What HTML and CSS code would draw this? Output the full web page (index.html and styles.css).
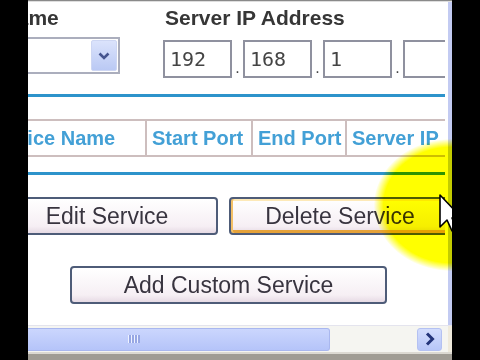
FILE: index.html
```html
<!DOCTYPE html>
<html lang="en">
<head>
    <meta charset="UTF-8">
    <title>Port Forwarding - Custom Services</title>
    <link rel="stylesheet" href="styles.css">
</head>
<body>
    <div class="screen">
        <div class="topline"></div>
        <div class="main">
            <div class="page">
                <div class="content">
                    <div class="fields">
                        <div class="field field-name">
                            <label>Service Name</label>
                            <div class="select">
                                <span class="select-btn">
                                    <svg width="12" height="8" viewBox="0 0 12 8"><path d="M1.5 1.5 L6 6 L10.5 1.5" fill="none" stroke="#46558f" stroke-width="2.6"/></svg>
                                </span>
                            </div>
                        </div>
                        <div class="field field-ip">
                            <label>Server IP Address</label>
                            <div class="ip">
                                <input class="octet" type="text" value="192">
                                <span class="dot">.</span>
                                <input class="octet" type="text" value="168">
                                <span class="dot">.</span>
                                <input class="octet" type="text" value="1">
                                <span class="dot">.</span>
                                <input class="octet" type="text" value="">
                            </div>
                        </div>
                    </div>

                    <div class="rule"></div>

                    <table class="services">
                        <colgroup>
                            <col class="col-name">
                            <col class="col-start">
                            <col class="col-end">
                            <col class="col-ip">
                        </colgroup>
                        <tr>
                            <th class="name-head">Service Name</th>
                            <th>Start Port</th>
                            <th>End Port</th>
                            <th>Server IP</th>
                        </tr>
                    </table>

                    <div class="rule rule-low"></div>

                    <div class="actions">
                        <button class="btn">Edit Service</button>
                        <button class="btn btn-hover">Delete Service</button>
                    </div>
                    <div class="add-row">
                        <button class="btn btn-wide">Add Custom Service</button>
                    </div>
                </div>
            </div>
            <div class="vstrip"></div>
        </div>

        <div class="hscroll">
            <div class="thumb"><span class="grip"></span></div>
            <div class="arrow">
                <svg width="10" height="14" viewBox="0 0 10 14"><path d="M2 1.5 L7.5 7 L2 12.5" fill="none" stroke="#23347a" stroke-width="3"/></svg>
            </div>
            <div class="corner"></div>
        </div>
        <div class="status"></div>

        <!-- screen recorder cursor highlight -->
        <div class="spot"></div>
        <svg class="cursor" width="26" height="40" viewBox="0 0 26 40">
            <path d="M1 1 L1 33 L8 26 L13 37 L18 35 L13 24 L23 24 Z" fill="#fff" stroke="#000" stroke-width="1.6" stroke-linejoin="round"/>
        </svg>
    </div>
</body>
</html>
```

FILE: styles.css
```css
/* General Page Styling */
body {
    margin: 0;
    background: #000;
    font-family: "Liberation Sans", Arial, sans-serif;
}

.screen {
    position: relative;
    width: 424px;
    height: 360px;
    margin-left: 28px;
    background: #fff;
    overflow: hidden;
    display: flex;
    flex-direction: column;
}

.topline {
    flex: none;
    height: 2px;
    background: linear-gradient(#8a8a8a 50%, #dedede 50%);
}

.main {
    flex: 1;
    display: flex;
    min-height: 0;
    background: #fff;
}

.page {
    width: 417px;
    overflow: hidden;
}

.vstrip {
    width: 4px;
    margin-left: auto;
    background: #c3cbf2;
}

/* page is scrolled sideways, so the left part is cut off */
.content {
    width: 620px;
    margin-left: -107px;
    padding-top: 4px;
}

/* Service name + IP fields */
.fields {
    display: flex;
    gap: 43px;
}

.field-name {
    width: 199px;
}

.field label {
    display: block;
    font-size: 21px;
    font-weight: bold;
    line-height: 24px;
    color: #363636;
    white-space: nowrap;
}

.field-ip label {
    padding-left: 2px;
}

.select {
    margin-top: 7px;
    height: 37px;
    box-sizing: border-box;
    border: 2px solid #abaebd;
    padding: 1px;
    display: flex;
    justify-content: flex-end;
}

.select-btn {
    width: 26px;
    height: 31px;
    box-sizing: border-box;
    border: 1px solid #cdd6f3;
    border-radius: 2px;
    background: linear-gradient(#dbe3fc, #bac9f4);
    display: flex;
    align-items: center;
    justify-content: center;
}

.ip {
    margin-top: 10px;
    display: flex;
}

.octet {
    width: 69px;
    height: 38px;
    box-sizing: border-box;
    border: 2px solid #8f919f;
    padding: 0 0 0 5px;
    margin: 0;
    font-family: "DejaVu Sans Mono", "Liberation Mono", monospace;
    font-size: 20px;
    color: #444;
    background: #fff;
    outline: none;
}

.dot {
    width: 11px;
    display: flex;
    align-items: flex-end;
    justify-content: center;
    font-size: 16px;
    line-height: 16px;
    padding-bottom: 2px;
    color: #444;
}

/* Blue separators */
.rule {
    margin-top: 16px;
    height: 3px;
    background: #2d93cb;
}

.rule-low {
    margin-top: 15px;
}

/* Services table header */
.services {
    margin-top: 22px;
    margin-left: 50px;
    border-collapse: collapse;
    table-layout: fixed;
    width: 504px;
}

.col-name { width: 174px; }
.col-start { width: 106px; }
.col-end { width: 94px; }
.col-ip { width: 130px; }

.services th {
    border: 2px solid #cdbebe;
    padding: 0 0 0 5px;
    height: 34px;
    font-size: 20px;
    font-weight: bold;
    color: #43a0d6;
    text-align: left;
    white-space: nowrap;
    overflow: hidden;
}

.services .name-head {
    padding-left: 11px;
}

/* Buttons */
.actions {
    margin-top: 22px;
    margin-left: 75px;
    display: flex;
    gap: 11px;
}

.btn {
    flex: none;
    width: 222px;
    height: 38px;
    box-sizing: border-box;
    padding: 0;
    border: 2px solid #4e5c78;
    border-radius: 4px;
    background: linear-gradient(#ffffff, #f6eff4 80%, #e6dae4);
    font-family: "Liberation Sans", Arial, sans-serif;
    font-size: 23px;
    color: #38343f;
}

.btn-hover {
    box-shadow: inset 2px 0 #f3c067, inset 0 -3px #e5a23a, inset 0 2px #fde9b8;
}

.add-row {
    margin-top: 31px;
    margin-left: 149px;
}

.btn-wide {
    width: 317px;
}

/* Horizontal scrollbar */
.hscroll {
    flex: none;
    height: 27px;
    box-sizing: border-box;
    border-top: 1px solid #e4e4ee;
    background: #f5f5f1;
    display: flex;
    align-items: center;
}

.thumb {
    width: 302px;
    height: 23px;
    box-sizing: border-box;
    border: 1px solid #a9b7ef;
    border-left: none;
    border-radius: 0 3px 3px 0;
    background: linear-gradient(#cbd6fd, #b5c4f9);
    display: flex;
    align-items: center;
}

.grip {
    margin-left: 100px;
    width: 12px;
    height: 8px;
    background: repeating-linear-gradient(90deg, #eef2ff 0 1px, #97a7e4 1px 3px);
}

.arrow {
    margin-left: auto;
    margin-right: 6px;
    width: 25px;
    height: 23px;
    box-sizing: border-box;
    border: 1px solid #b4c1f2;
    border-radius: 3px;
    background: linear-gradient(#d3ddfd, #b7c6f8);
    display: flex;
    align-items: center;
    justify-content: center;
}

.corner {
    width: 4px;
    align-self: stretch;
    background: #efeadc;
}

.status {
    flex: none;
    height: 8px;
    background: linear-gradient(#dcd9d2 2px, #a09c94 2px);
}

/* Overlays from the screen recording */
.spot {
    position: absolute;
    left: 346px;
    top: 139px;
    width: 156px;
    height: 132px;
    border-radius: 50%;
    background: radial-gradient(ellipse at center, #ffff00 62%, rgba(255, 255, 0, 0) 71%);
    mix-blend-mode: multiply;
    pointer-events: none;
}

.cursor {
    position: absolute;
    left: 411px;
    top: 194px;
}
```
